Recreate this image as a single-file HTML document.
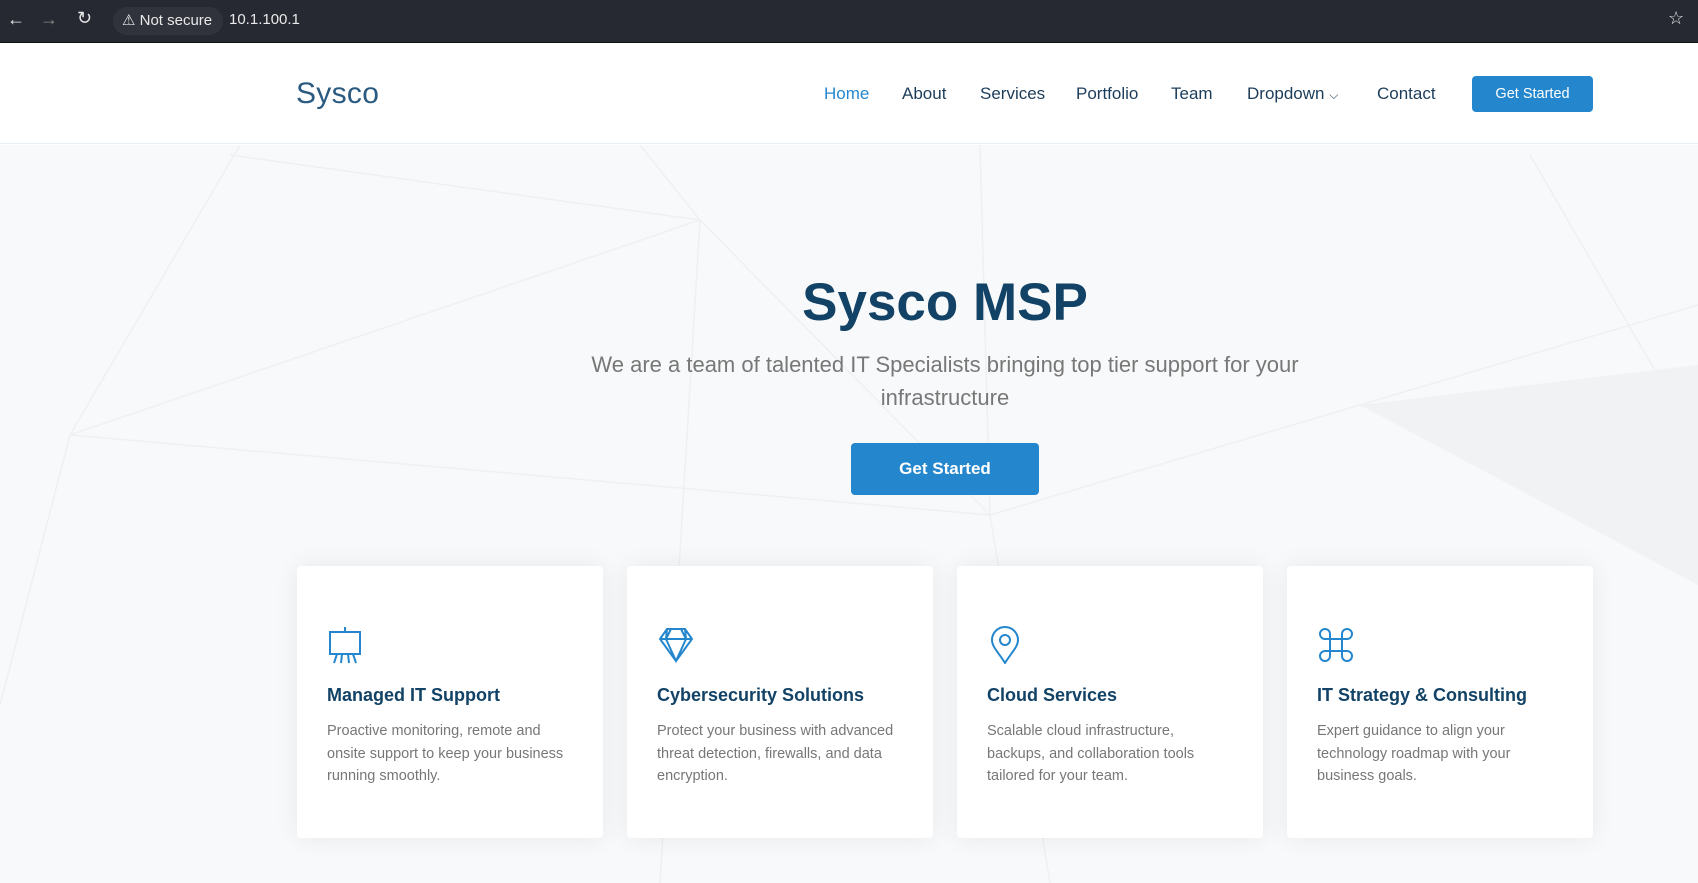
<!DOCTYPE html>
<html><head><meta charset="utf-8"><style>
*{margin:0;padding:0;box-sizing:border-box}
body{width:1698px;height:883px;overflow:hidden;font-family:"Liberation Sans",sans-serif;background:#fff;position:relative}
.bar{position:absolute;left:0;top:0;width:1698px;height:43px;background:#262932;border-bottom:1px solid #111;color:#e8e8e8;font-size:15px}
.pill{position:absolute;left:113px;top:7px;height:28px;width:110px;background:#30333c;border-radius:14px}
.hdr{position:absolute;top:43px;left:0;width:1698px;height:101px;background:#fff;border-bottom:1px solid #e6edf3}
.logo{position:absolute;left:296px;top:34px;font-size:30px;color:#2a5a80;font-weight:400;letter-spacing:.3px}
.nav{position:absolute;top:41px;font-size:17px;color:#1c3d5a}
.btn{position:absolute;background:#2487ce;color:#fff;border-radius:4px;text-align:center}
.hero{position:absolute;top:145px;left:0;width:1698px;height:738px;background:#f8f9fa;overflow:hidden}
h1{position:absolute;top:272px;left:0;width:1890px;text-align:center;font-size:53px;color:#124265;font-weight:700}
.sub{position:absolute;top:348px;left:570px;width:750px;text-align:center;font-size:22px;line-height:33px;color:#777}
.card{position:absolute;top:566px;width:306px;height:272px;background:#fff;box-shadow:0 0 25px rgba(0,0,0,.07);border-radius:4px;padding:0 30px}
.card svg{position:absolute;left:30px;top:60px}
.card h4{position:absolute;top:119px;left:30px;font-size:18px;color:#124265;font-weight:700}
.card p{position:absolute;top:154px;left:30px;right:30px;font-size:14.5px;line-height:22.5px;color:#777}
</style></head><body>
<div class="bar">
<span style="position:absolute;left:7px;top:9px;font-size:18px">←</span>
<span style="position:absolute;left:40px;top:9px;font-size:18px;color:#888">→</span>
<span style="position:absolute;left:77px;top:8px;font-size:18px">↻</span>
<div class="pill"></div>
<span style="position:absolute;left:122px;top:11px">⚠ Not secure</span>
<span style="position:absolute;left:229px;top:11px">10.1.100.1</span>
<span style="position:absolute;left:1668px;top:8px;font-size:18px">☆</span>
</div>
<div class="hdr">
<div class="logo">Sysco</div>
<span class="nav" style="left:824px;color:#2487ce">Home</span>
<span class="nav" style="left:902px">About</span>
<span class="nav" style="left:980px">Services</span>
<span class="nav" style="left:1076px">Portfolio</span>
<span class="nav" style="left:1171px">Team</span>
<span class="nav" style="left:1247px">Dropdown <span style="font-size:12px">⌵</span></span>
<span class="nav" style="left:1377px">Contact</span>
<div class="btn" style="left:1472px;top:33px;width:121px;height:36px;line-height:36px;font-size:14.5px">Get Started</div>
</div>
<div class="hero">
<svg width="1698" height="738" style="position:absolute;left:0;top:0" stroke="#eef0f2" stroke-width="1.5" fill="none">
<polyline points="240,0 70,290 0,560"/><polyline points="70,290 700,75 640,0"/><polyline points="700,75 990,370 1360,260 1698,160"/>
<polyline points="990,370 980,0"/><polyline points="70,290 990,370 1050,738"/><polyline points="1360,260 1698,380"/>
<polyline points="700,75 660,738"/><polyline points="1530,10 1698,300"/><polyline points="230,10 700,75"/>
<polygon points="1360,260 1698,220 1698,440" fill="#f1f2f4" stroke="none"/>
</svg>
</div>
<h1>Sysco MSP</h1>
<div class="sub">We are a team of talented IT Specialists bringing top tier support for your infrastructure</div>
<div class="btn" style="left:851px;top:443px;width:188px;height:52px;line-height:52px;font-size:17px;font-weight:700">Get Started</div>

<div class="card" style="left:297px">
<svg width="36" height="38" viewBox="0 0 36 38" fill="none" stroke="#2487ce" stroke-width="2"><rect x="3" y="6" width="30" height="22"/><path d="M18 1v5M10 28l-3 9M26 28l3 9M15 28l-1 9M21 28l1 9"/></svg>
<h4>Managed IT Support</h4><p>Proactive monitoring, remote and onsite support to keep your business running smoothly.</p></div>
<div class="card" style="left:627px">
<svg width="38" height="38" viewBox="0 0 38 38" fill="none" stroke="#2487ce" stroke-width="2"><path d="M10 3h18l7 10-16 22L3 13z M3 13h32 M10 3l-1 10 10 22 10-22-1-10 M14 3l-5 10 M24 3l5 10"/></svg>
<h4>Cybersecurity Solutions</h4><p>Protect your business with advanced threat detection, firewalls, and data encryption.</p></div>
<div class="card" style="left:957px">
<svg width="36" height="38" viewBox="0 0 36 38" fill="none" stroke="#2487ce" stroke-width="2"><path d="M18 37C12 27 5 21 5 14a13 13 0 0 1 26 0c0 7-7 13-13 23z"/><circle cx="18" cy="14" r="5"/></svg>
<h4>Cloud Services</h4><p>Scalable cloud infrastructure,<br>backups, and collaboration tools<br>tailored for your team.</p></div>
<div class="card" style="left:1287px">
<svg width="38" height="38" viewBox="0 0 38 38" fill="none" stroke="#2487ce" stroke-width="2"><path d="M13 13V8a5 5 0 1 0-5 5h22a5 5 0 1 0-5-5v22a5 5 0 1 0 5-5H8a5 5 0 1 0 5 5z"/></svg>
<h4>IT Strategy &amp; Consulting</h4><p>Expert guidance to align your technology roadmap with your business goals.</p></div>
</body></html>
